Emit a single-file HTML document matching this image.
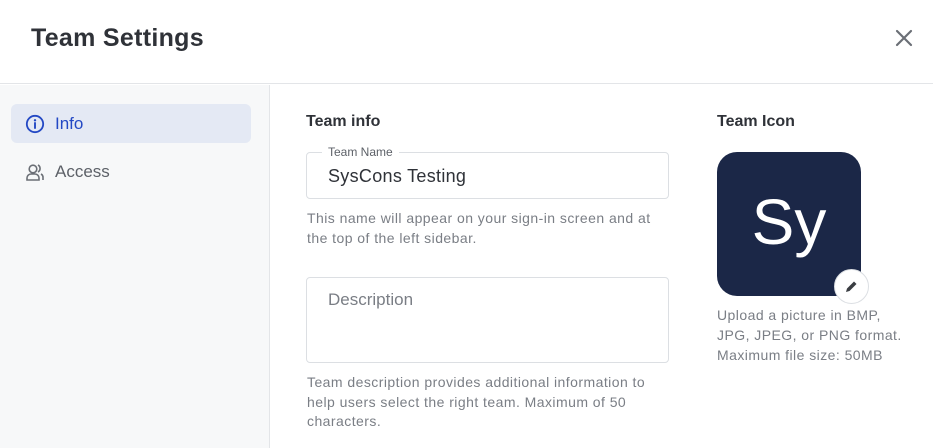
<!DOCTYPE html>
<html><head><style>
*{box-sizing:border-box;margin:0;padding:0}
body{width:933px;height:448px;overflow:hidden;background:#fff;font-family:"Liberation Sans",sans-serif;position:relative;color:#333}
.abs{position:absolute}
.hdr{left:0;top:0;width:933px;height:84px;border-bottom:1px solid #e3e5e8}
.side{left:0;top:85px;width:270px;height:363px;background:#f7f8f9;border-right:1px solid #e3e5e8}
.help{font-size:14px;color:#7a7e85;line-height:19.5px;letter-spacing:0.45px}
</style></head><body>
<div class="abs hdr"></div>
<div class="abs" style="left:31px;top:24px;font-size:25px;font-weight:bold;color:#2f3238;letter-spacing:0.3px">Team Settings</div>
<svg class="abs" style="left:895px;top:29px" width="18" height="18" viewBox="0 0 18 18"><path d="M2 2L16 16M16 2L2 16" stroke="#6b6f76" stroke-width="2.2" stroke-linecap="round"/></svg>
<div class="abs side"></div>
<div class="abs" style="left:11px;top:104px;width:240px;height:39px;background:#e4e9f4;border-radius:6px"></div>
<svg class="abs" style="left:25px;top:114px" width="20" height="20" viewBox="0 0 20 20"><circle cx="10" cy="10" r="8.2" fill="none" stroke="#2348c4" stroke-width="1.8"/><circle cx="10" cy="6.3" r="1.2" fill="#2348c4"/><path d="M10 9v5" stroke="#2348c4" stroke-width="1.9" stroke-linecap="round"/></svg>
<div class="abs" style="left:55px;top:114px;font-size:17px;color:#2348c4">Info</div>
<svg class="abs" style="left:25px;top:162px" width="20" height="20" viewBox="0 0 20 20" fill="none" stroke="#6b6f76" stroke-width="1.6"><circle cx="8" cy="7" r="3.8"/><path d="M2 18v-2a4 4 0 0 1 4-4h4a4 4 0 0 1 4 4v2z"/><path d="M13 3a4 4 0 0 1 0 7M16 12a4 4 0 0 1 2 4v2"/></svg>
<div class="abs" style="left:55px;top:162px;font-size:17px;color:#5d6168">Access</div>

<div class="abs" style="left:306px;top:113px;font-size:16px;font-weight:bold;color:#2f3238">Team info</div>
<div class="abs" style="left:306px;top:152px;width:363px;height:47px;border:1px solid #dcdfe3;border-radius:4px"></div>
<div class="abs" style="left:322px;top:145px;padding:0 6px;background:#fff;font-size:12px;color:#5d6168">Team Name</div>
<div class="abs" style="left:328px;top:166px;font-size:18px;color:#2f3238;letter-spacing:0.3px">SysCons Testing</div>
<div class="abs help" style="left:307px;top:209px;width:365px">This name will appear on your sign-in screen and at the top of the left sidebar.</div>
<div class="abs" style="left:306px;top:277px;width:363px;height:86px;border:1px solid #dcdfe3;border-radius:4px"></div>
<div class="abs" style="left:328px;top:290px;font-size:17px;color:#7a7e85">Description</div>
<div class="abs help" style="left:307px;top:373px;width:362px">Team description provides additional information to help users select the right team. Maximum of 50 characters.</div>

<div class="abs" style="left:717px;top:113px;font-size:16px;font-weight:bold;color:#2f3238">Team Icon</div>
<div class="abs" style="left:717px;top:152px;width:144px;height:144px;background:#1b2747;border-radius:20px;color:#fff;font-size:64px;text-align:center;line-height:140px">Sy</div>
<div class="abs" style="left:834px;top:269px;width:35px;height:35px;border-radius:50%;background:#fff;border:1px solid #dcdfe3"></div>
<svg class="abs" style="left:844px;top:279px" width="15" height="15" viewBox="0 0 15 15"><path d="M2 13l1-3.5 7-7 2.5 2.5-7 7z" fill="#3a3d42"/></svg>
<div class="abs help" style="left:717px;top:305px;width:185px;line-height:20px">Upload a picture in BMP, JPG, JPEG, or PNG format. Maximum file size: 50MB</div>
</body></html>
